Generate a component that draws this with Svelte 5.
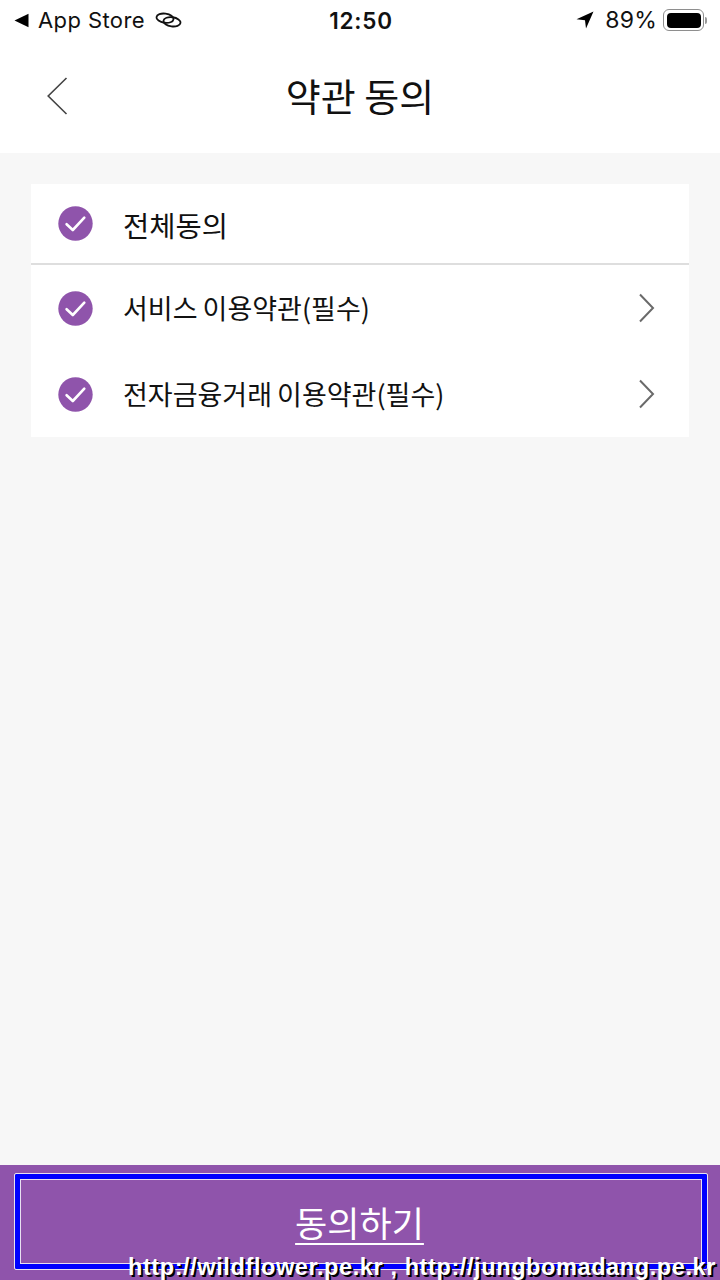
<script>
  const rows = [
    { label: '서비스 이용약관(필수)' },
    { label: '전자금융거래 이용약관(필수)' }
  ];
</script>

{#snippet check()}
  <svg class="check" viewBox="0 0 35 35" width="35" height="35" aria-hidden="true">
    <circle cx="17.5" cy="17.5" r="17.2" fill="#8f54ab" />
    <path d="M8.6 18.2 L14.8 24 L26.3 11.6" fill="none" stroke="#fff" stroke-width="2.6" stroke-linecap="round" stroke-linejoin="round" />
  </svg>
{/snippet}

<div class="page">
  <div class="status">
    <div class="left">
      <svg width="15" height="15" viewBox="0 0 15 15" aria-hidden="true"><path d="M0.5 7.5 L14.5 0.8 V14.2 Z" fill="#000" /></svg>
      <span class="app">App Store</span>
      <svg class="link" width="27" height="16" viewBox="0 0 27 16" fill="none" stroke="#111" stroke-width="1.8" aria-hidden="true">
        <ellipse cx="10" cy="6.2" rx="8.6" ry="4.6" transform="rotate(8 10 6.2)" />
        <ellipse cx="17" cy="9.8" rx="8.6" ry="4.6" transform="rotate(8 17 9.8)" />
      </svg>
    </div>
    <div class="time">12:50</div>
    <div class="right">
      <svg width="18" height="18" viewBox="0 0 18 18" aria-hidden="true"><path d="M17.5 0.5 L0.5 8.2 L9 9.2 L10 17.5 Z" fill="#000" /></svg>
      <span class="pct">89%</span>
      <div class="battery"><div class="level"></div></div>
      <div class="nub"></div>
    </div>
  </div>

  <header class="nav">
    <button class="back" aria-label="뒤로">
      <svg width="22" height="38" viewBox="0 0 22 38" fill="none" stroke="#444" stroke-width="1.6" aria-hidden="true"><path d="M20.5 1 L2.2 19 L20.5 37" /></svg>
    </button>
    <h1>약관 동의</h1>
  </header>

  <main>
    <section class="card">
      <div class="row all">
        {@render check()}
        <span class="label big">전체동의</span>
      </div>
      {#each rows as r}
        <div class="row sub">
          {@render check()}
          <span class="label">{r.label}</span>
          <svg class="chev" width="16" height="30" viewBox="0 0 16 30" fill="none" stroke="#6a6a6a" stroke-width="2" aria-hidden="true"><path d="M1 1.5 L14 15 L1 28.5" /></svg>
        </div>
      {/each}
    </section>
  </main>

  <footer class="bar">
    <button class="agree"><span>동의하기</span></button>
  </footer>

  <div class="mark">http://wildflower.pe.kr , http://jungbomadang.pe.kr</div>
</div>

<style>
  :global(body) { margin: 0; }
  .page {
    position: relative;
    width: 720px;
    height: 1280px;
    overflow: hidden;
    display: flex;
    flex-direction: column;
    background: #f7f7f7;
    font-family: "Noto Sans CJK KR", "Noto Sans", sans-serif;
    color: #111;
  }
  .status {
    height: 40px;
    flex: none;
    background: #fff;
    display: grid;
    grid-template-columns: 1fr auto 1fr;
    align-items: center;
    font-family: Inter, "Liberation Sans", sans-serif;
    font-size: 22px;
    color: #111;
  }
  .left { display: flex; align-items: center; padding-left: 14px; }
  .app { margin-left: 9px; letter-spacing: 0.4px; }
  .link { margin-left: 10px; }
  .time { font-weight: 600; font-size: 22.5px; letter-spacing: 0.8px; padding-left: 2px; }
  .right { display: flex; align-items: center; justify-content: flex-end; padding-right: 13px; }
  .pct { margin-left: 11px; font-size: 23px; letter-spacing: 0.2px; }
  .battery {
    margin-left: 6px;
    width: 41px;
    height: 22px;
    box-sizing: border-box;
    border: 1.5px solid #8e8e8e;
    border-radius: 6px;
    padding: 2.5px;
  }
  .level { width: 100%; height: 100%; background: #000; border-radius: 4px; }
  .nub { width: 2px; height: 7px; margin-left: 1px; background: #999; border-radius: 0 2px 2px 0; }

  .nav {
    position: relative;
    height: 113px;
    flex: none;
    background: #fff;
    display: flex;
    align-items: center;
    justify-content: center;
  }
  .back {
    position: absolute;
    left: 46px;
    top: 37px;
    padding: 0;
    border: 0;
    background: none;
    display: flex;
  }
  h1 {
    margin: 0 0 3px;
    font-size: 38px;
    font-weight: 400;
    line-height: 1.2;
    color: #111;
  }

  main { flex: 1; padding: 31px 31px 0; min-height: 0; }
  .card { background: #fff; height: 253px; }
  .row { display: flex; align-items: center; padding-left: 27px; }
  .all { height: 79px; border-bottom: 2px solid #dedede; }
  .sub { height: 86px; }
  .label { margin-left: 30px; font-size: 27px; line-height: 1.2; color: #111; word-spacing: -1px; }
  .big { font-size: 28.5px; padding-top: 3px; }
  .check { flex: none; }
  .chev { margin-left: auto; margin-right: 34px; }

  .bar {
    height: 115px;
    flex: none;
    box-sizing: border-box;
    background: #8f54ab;
    padding: 9px 13px 11px 15px;
  }
  .agree {
    width: 100%;
    height: 100%;
    box-sizing: border-box;
    padding: 0 3px 0 0;
    background: none;
    border: 5px solid #0000ff;
    outline: 1px solid #e8e0f0;
    border-radius: 1px;
    box-shadow: inset 0 0 0 1px #e8e0f0;
    color: #fff;
    font-family: inherit;
    font-size: 35px;
    line-height: 1.2;
    display: flex;
    align-items: center;
    justify-content: center;
  }
  .agree span { text-decoration: underline; text-underline-offset: 6px; text-decoration-thickness: 2px; }

  .mark {
    position: absolute;
    right: 4px;
    bottom: 0;
    font-family: "Liberation Sans", Arial, sans-serif;
    font-size: 23.5px;
    font-weight: 700;
    letter-spacing: 0.6px;
    line-height: 25px;
    color: #fff;
    white-space: nowrap;
    text-shadow: 2px 2px 0 #000;
  }
</style>
